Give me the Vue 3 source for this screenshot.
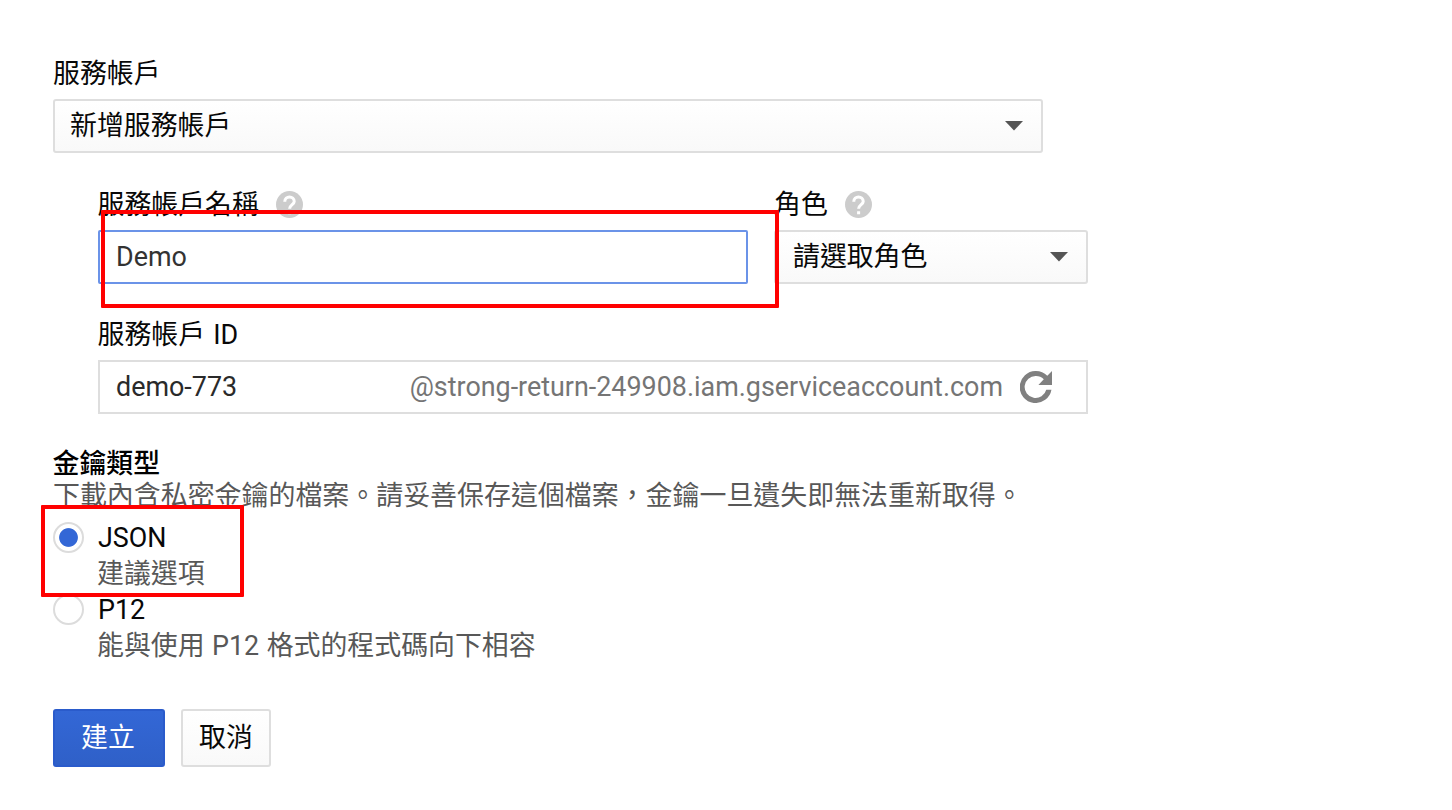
<script setup>
const formats = [
  { id: 'json', name: 'JSON', note: '建議選項', selected: true },
  { id: 'p12', name: 'P12', note: '能與使用 P12 格式的程式碼向下相容', selected: false },
]
</script>

<template>
  <main class="page">
    <div class="label"><span>服務帳戶</span></div>
    <div class="box select account">
      <span>新增服務帳戶</span>
      <svg class="arrow" width="18" height="10" viewBox="0 0 18 10"><path d="M0 0H18L9 9.5Z" /></svg>
    </div>

    <section class="details">
      <div class="row">
        <div class="name-col">
          <div class="label">
            <span>服務帳戶名稱</span>
            <svg class="help" viewBox="0 0 24 24"><circle cx="12" cy="12" r="12" /><path d="M7.8 9.6C7.8 3.8 16.2 4.1 16.2 9.3C16.2 12 12.1 12.4 12.1 15.8M12.1 18V20.6" /></svg>
          </div>
          <div class="box focused"><span>Demo</span></div>
        </div>
        <div class="role-col">
          <div class="label">
            <span>角色</span>
            <svg class="help" viewBox="0 0 24 24"><circle cx="12" cy="12" r="12" /><path d="M7.8 9.6C7.8 3.8 16.2 4.1 16.2 9.3C16.2 12 12.1 12.4 12.1 15.8M12.1 18V20.6" /></svg>
          </div>
          <div class="box select">
            <span>請選取角色</span>
            <svg class="arrow" width="18" height="10" viewBox="0 0 18 10"><path d="M0 0H18L9 9.5Z" /></svg>
          </div>
        </div>
        <div class="mark mark-name"></div>
      </div>
      <div class="label id-label"><span>服務帳戶 ID</span></div>
      <div class="box id-box">
        <span>demo-773</span>
        <span class="domain">@strong-return-249908.iam.gserviceaccount.com</span>
        <svg class="refresh" viewBox="4 4 16 16"><path d="M17.65 6.35A7.96 7.96 0 0 0 12 4a8 8 0 1 0 7.73 9.4h-2.6A5.5 5.5 0 1 1 12 6.5c1.5 0 2.8.5 3.9 1.6L13.2 11H20V4z" /></svg>
      </div>
    </section>

    <section class="key-type">
      <div class="key-title">金鑰類型</div>
      <div class="muted key-desc">下載內含私密金鑰的檔案。請妥善保存這個檔案，金鑰一旦遺失即無法重新取得。</div>
      <div class="options">
        <div v-for="f in formats" :key="f.id" class="option">
          <i class="radio" :class="{ on: f.selected }"></i>
          <div class="choice">
            <div class="line">{{ f.name }}</div>
            <div class="line muted note">{{ f.note }}</div>
          </div>
        </div>
        <div class="mark mark-json"></div>
      </div>
    </section>

    <div class="actions">
      <button class="btn primary">建立</button>
      <button class="btn">取消</button>
    </div>
  </main>
</template>

<style>
body { background: #fff; overflow: hidden; }
</style>

<style scoped>
* { box-sizing: border-box; }
.page {
  width: 1452px;
  height: 810px;
  padding: 48px 0 0 53px;
  font-family: Roboto, "Noto Sans CJK TC", sans-serif;
  font-size: 26.9px;
  color: #080808;
  white-space: nowrap;
}
.label { height: 51px; line-height: 50px; display: flex; align-items: center; }
.help { width: 27px; height: 27px; margin-left: 17px; }
.help circle { fill: #ccc; }
.help path { fill: none; stroke: #fff; stroke-width: 2.7; }
.box {
  height: 54px;
  border: 2px solid #dedede;
  line-height: 50px;
  padding: 0 16px;
  display: flex;
  align-items: center;
  background: #fff;
}
.select {
  justify-content: space-between;
  padding-left: 15px;
  padding-right: 18px;
  border-radius: 3px;
  background: linear-gradient(#fff, #f9f9f9);
}
.account { width: 990px; }
.arrow { fill: #555; }
.details { width: 990px; margin: 26px 0 0 45px; }
.row { display: flex; position: relative; }
.name-col { width: 650px; margin-right: 26px; }
.role-col { width: 314px; }
.role-col .select { padding-left: 17px; }
.name-col .label, .id-label { margin-left: -0.5px; }
.focused { border-color: #6b93e8; border-radius: 2px; color: #333; }
.id-label { height: 76px; line-height: 78px; padding-top: 25px; word-spacing: 1.5px; }
.id-box { color: #2a2a2a; }
.domain { margin-left: auto; color: #757575; }
.refresh { width: 32px; height: 32px; margin: 0 18px 0 17px; fill: #808080; }
.key-type { margin-top: 33px; }
.key-title { height: 32px; line-height: 34px; color: #000; font-weight: 500; margin-left: -0.5px; }
.muted { color: #585858; }
.key-desc { height: 40px; line-height: 34px; font-size: 26.95px; }
.options { position: relative; }
.option { display: flex; height: 72px; }
.radio {
  width: 31px;
  height: 31px;
  margin: 3px 14px 0 0;
  border: 2px solid #dcdcdc;
  border-radius: 50%;
  background: #fff;
}
.radio.on { background: radial-gradient(circle, #3367d6 8.9px, #fff 9.8px); }
.choice { padding-top: 1px; }
.line { height: 36px; line-height: 36px; }
.note { margin-left: -1px; word-spacing: 0.8px; }
.mark { position: absolute; border: 4px solid #f00; border-radius: 1px; pointer-events: none; }
.mark-name { left: 3px; top: 31px; width: 678px; height: 98px; }
.mark-json { left: -12px; top: -14px; width: 203px; height: 92px; }
.actions { display: flex; gap: 16px; margin-top: 46px; }
.btn {
  width: 90px;
  height: 58px;
  padding: 0;
  border: 2px solid #dedede;
  border-radius: 3px;
  background: linear-gradient(#fff, #f9f9f9);
  color: #080808;
  font: inherit;
  line-height: 54px;
}
.btn.primary { width: 112px; padding-right: 2px; color: #fff; border-color: #2a5bcb; background: linear-gradient(#3367d6, #2f60c8); }
</style>
